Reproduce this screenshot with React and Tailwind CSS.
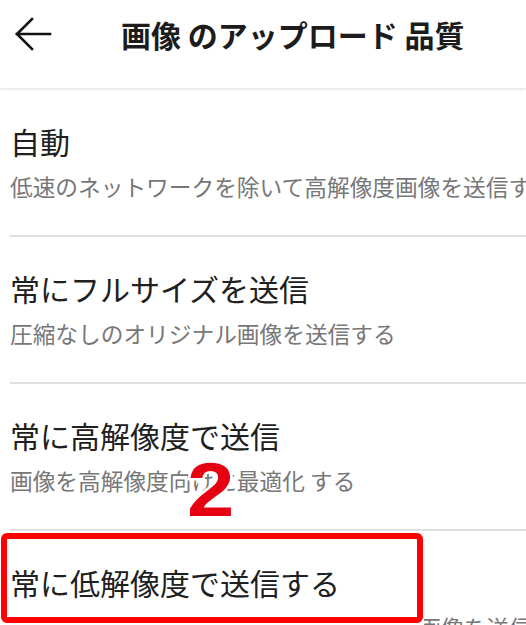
import React from 'react'

const options = [
  { title: '自動', sub: '低速のネットワークを除いて高解像度画像を送信する' },
  { title: '常にフルサイズを送信', sub: '圧縮なしのオリジナル画像を送信する' },
  { title: '常に高解像度で送信', sub: '画像を高解像度向けに最適化 する' },
]

function BackArrow() {
  return (
    <svg width="40" height="40" viewBox="0 0 40 40" fill="none" stroke="#111" strokeWidth="2.6" strokeLinecap="square">
      <path d="M36 20H3" />
      <path d="M18 5L3 20l15 15" />
    </svg>
  )
}

export default function App() {
  return (
    <div className="w-[526px] h-[625px] overflow-hidden bg-white relative font-['Noto_Sans_CJK_JP','Noto_Sans',sans-serif]">
      {/* Header */}
      <div className="h-[88px] pt-[16px] bg-white shadow-[0_1px_3px_rgba(0,0,0,0.14)] relative z-10">
        <div className="flex items-center h-[36px]">
          <div className="ml-[14px] w-[40px] h-[40px] flex items-center">
            <BackArrow />
          </div>
          <h1 className="ml-[67px] text-[30px] leading-[36px] font-bold text-[#1c1c1c] whitespace-nowrap">
            画像 のアップロード 品質
          </h1>
        </div>
      </div>

      {/* Options */}
      <div className="pt-[2px]">
        {options.map((o, i) => (
          <div key={o.title} className="relative">
            <div className="ml-[10px] h-[147px] pt-[33px] border-b-2 border-[#e0e0e0] whitespace-nowrap">
              <div className="text-[30px] leading-[36px] text-[#202020]">{o.title}</div>
              <div className="mt-[14px] text-[22.7px] leading-[28px] text-[#777]">{o.sub}</div>
            </div>
            {i === 2 && (
              <span className="absolute left-[187px] top-[68px] origin-left scale-x-[1.12] text-[76px] leading-none font-bold text-[#e50012] font-['Liberation_Sans',sans-serif] [-webkit-text-stroke:5px_white] [paint-order:stroke_fill]">
                2
              </span>
            )}
          </div>
        ))}

        {/* Highlighted option */}
        <div className="relative">
          <div className="absolute left-0 top-[2px] w-[424px] h-[100px] bg-white z-10">
            <div className="ml-[1px] w-[422px] h-[90px] border-[6px] border-[#ff0000] rounded-[6px]" />
          </div>
          <div className="ml-[10px] h-[147px] pt-[33px] whitespace-nowrap">
            <div className="relative z-20 text-[30px] leading-[36px] text-[#202020]">常に低解像度で送信する</div>
            <div className="mt-[14px] text-[22.7px] leading-[28px] text-[#777]">通信量を節約するために常に低解像度の画像を送信</div>
          </div>
        </div>
      </div>
    </div>
  )
}
